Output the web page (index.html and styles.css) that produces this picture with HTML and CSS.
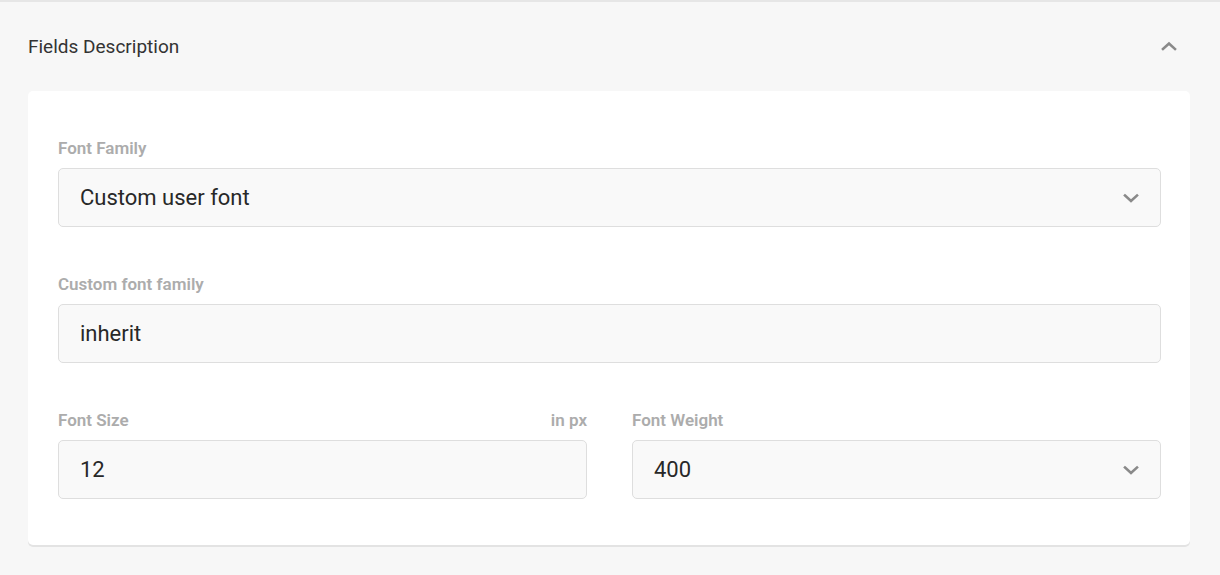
FILE: index.html
```html
<!DOCTYPE html>
<html lang="en">
<head>
<meta charset="utf-8">
<title>Fields Description</title>
<link rel="stylesheet" href="styles.css">
</head>
<body>
<section class="panel">
  <header class="panel-header">
    <h2 class="panel-title">Fields Description</h2>
    <svg class="chev chev-up" width="16" height="10" viewBox="0 0 16 10" aria-hidden="true"><path d="M2 8 L8 2.5 L14 8" fill="none" stroke="#8a8a8a" stroke-width="2.6" stroke-linecap="square"/></svg>
  </header>
  <div class="card">
    <div class="field">
      <div class="label-row"><span class="label">Font Family</span></div>
      <div class="control select">
        <span class="value">Custom user font</span>
        <svg class="chev" width="16" height="10" viewBox="0 0 16 10" aria-hidden="true"><path d="M2 2.5 L8 8 L14 2.5" fill="none" stroke="#8a8a8a" stroke-width="2.6" stroke-linecap="square"/></svg>
      </div>
    </div>
    <div class="field">
      <div class="label-row"><span class="label">Custom font family</span></div>
      <div class="control">
        <span class="value">inherit</span>
      </div>
    </div>
    <div class="field-grid">
      <div class="field">
        <div class="label-row"><span class="label">Font Size</span><span class="label unit">in px</span></div>
        <div class="control">
          <span class="value">12</span>
        </div>
      </div>
      <div class="field">
        <div class="label-row"><span class="label">Font Weight</span></div>
        <div class="control select">
          <span class="value">400</span>
          <svg class="chev" width="16" height="10" viewBox="0 0 16 10" aria-hidden="true"><path d="M2 2.5 L8 8 L14 2.5" fill="none" stroke="#8a8a8a" stroke-width="2.6" stroke-linecap="square"/></svg>
        </div>
      </div>
    </div>
  </div>
</section>
</body>
</html>
```
FILE: styles.css
```css
html, body {
  margin: 0;
  padding: 0;
}
body {
  background: #f7f7f7;
  border-top: 2px solid #e6e6e6;
  font-family: Roboto, "Liberation Sans", Arial, sans-serif;
  height: 573px;
  overflow: hidden;
}
.panel {
  padding: 0 30px 0 28px;
}
.panel-header {
  height: 89px;
  display: flex;
  align-items: center;
  justify-content: space-between;
  padding-right: 13px;
}
.panel-title {
  margin: 0;
  font-size: 19px;
  font-weight: 400;
  color: #333;
  padding-bottom: 1px;
}
.chev-up {
  margin-bottom: 2px;
}
.card {
  background: #fff;
  border-radius: 5px;
  box-shadow: 0 2px 0 #e3e3e3;
  padding: 47px 29px 46px 30px;
  display: flex;
  flex-direction: column;
  gap: 47px;
}
.field-grid {
  display: grid;
  grid-template-columns: 1fr 1fr;
  column-gap: 45px;
}
.label-row {
  display: flex;
  justify-content: space-between;
  height: 20px;
  margin-bottom: 10px;
}
.label {
  font-size: 17px;
  line-height: 20px;
  font-weight: 600;
  color: #acacac;
}
.control {
  height: 57px;
  box-sizing: content-box;
  border: 1px solid #dedede;
  border-radius: 5px;
  background: #f9f9f9;
  display: flex;
  align-items: center;
  justify-content: space-between;
  padding: 0 21px 0 21px;
}
.value {
  font-size: 22px;
  color: #282828;
}
.chev {
  display: block;
}
```
